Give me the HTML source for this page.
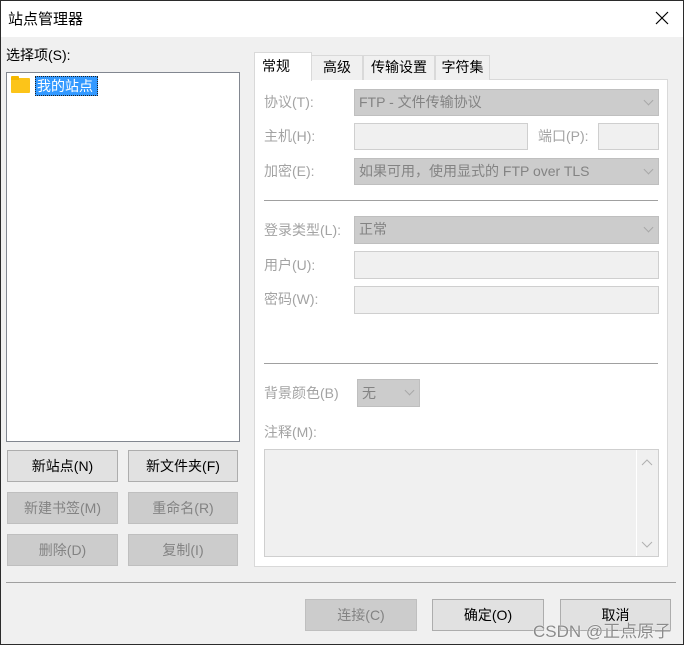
<!DOCTYPE html>
<html><head><meta charset="utf-8"><style>
*{box-sizing:border-box;margin:0;padding:0}
body{width:684px;height:645px;overflow:hidden;background:#fff;font-family:"Liberation Sans","Noto Sans CJK SC",sans-serif;font-size:14px;position:relative}
.a{position:absolute}
.win{left:0;top:0;width:684px;height:645px;border:1px solid #2b2b2b;background:#f0f0f0}
.title{left:1px;top:1px;width:682px;height:36px;background:#fff}
.btn{position:absolute;height:32px;border:1px solid #adadad;background:#e1e1e1;color:#000;text-align:center;line-height:30px;font-size:14px}
.dis{background:#cccccc;border-color:#bfbfbf;color:#838383}
.lbl{position:absolute;color:#a3a3a3;font-size:14px;line-height:18px}
.cmb{position:absolute;background:#cccccc;border:1px solid #bfbfbf;color:#838383;font-size:14px;line-height:24px;padding-left:4px}
.cmb:after{content:"";position:absolute;right:6px;top:7px;width:6px;height:6px;border-right:1px solid #a8a8a8;border-bottom:1px solid #a8a8a8;transform:rotate(45deg)}
.inp{position:absolute;background:#f0f0f0;border:1px solid #cfcfcf}
.tab{position:absolute;top:55px;height:25px;border:1px solid #d9d9d9;border-bottom:none;background:#f0f0f0;font-size:14px;line-height:22px;text-align:center}
.sep{position:absolute;height:1px;background:#a0a0a0}
</style></head><body>
<div class="a win"></div>
<div class="a title"></div>
<div class="a" style="left:8px;top:8px;font-size:15px">站点管理器</div>
<svg class="a" style="left:655px;top:11px" width="14" height="14"><path d="M1 1L13 13M13 1L1 13" stroke="#000" stroke-width="1.2"/></svg>

<div class="a" style="left:6px;top:45px">选择项(S):</div>
<div class="a" style="left:6px;top:72px;width:234px;height:370px;background:#fff;border:1px solid #828790"></div>
<div class="a" style="left:11px;top:78px;width:19px;height:15px;background:#fcc419;border-radius:1px"></div>
<div class="a" style="left:11px;top:76px;width:8px;height:4px;background:#f5b800;border-radius:1px 1px 0 0"></div>
<div class="a" style="left:35px;top:76px;width:63px;height:20px;background:#3399ff;border:1px dotted #222;color:#fff;line-height:18px;padding-left:1px">我的站点</div>

<div class="btn" style="left:7px;top:450px;width:111px">新站点(N)</div>
<div class="btn" style="left:128px;top:450px;width:110px">新文件夹(F)</div>
<div class="btn dis" style="left:7px;top:492px;width:111px">新建书签(M)</div>
<div class="btn dis" style="left:128px;top:492px;width:110px">重命名(R)</div>
<div class="btn dis" style="left:7px;top:534px;width:111px">删除(D)</div>
<div class="btn dis" style="left:128px;top:534px;width:110px">复制(I)</div>

<div class="a" style="left:254px;top:79px;width:414px;height:488px;background:#fff;border:1px solid #d9d9d9"></div>
<div class="tab" style="left:311px;width:52px">高级</div>
<div class="tab" style="left:363px;width:72px">传输设置</div>
<div class="tab" style="left:435px;width:55px">字符集</div>
<div class="tab" style="left:254px;top:52px;width:58px;height:29px;background:#fff;line-height:26px;text-align:left;padding-left:7px">常规</div>

<div class="lbl" style="left:264px;top:93px">协议(T):</div>
<div class="cmb" style="left:354px;top:89px;width:305px;height:27px">FTP - 文件传输协议</div>
<div class="lbl" style="left:264px;top:127px">主机(H):</div>
<div class="inp" style="left:354px;top:123px;width:174px;height:27px"></div>
<div class="lbl" style="left:538px;top:127px">端口(P):</div>
<div class="inp" style="left:598px;top:123px;width:61px;height:27px"></div>
<div class="lbl" style="left:264px;top:162px">加密(E):</div>
<div class="cmb" style="left:354px;top:158px;width:305px;height:27px">如果可用，使用显式的 FTP over TLS</div>
<div class="sep" style="left:264px;top:200px;width:394px"></div>

<div class="lbl" style="left:264px;top:221px">登录类型(L):</div>
<div class="cmb" style="left:354px;top:216px;width:305px;height:28px">正常</div>
<div class="lbl" style="left:264px;top:256px">用户(U):</div>
<div class="inp" style="left:354px;top:251px;width:305px;height:28px"></div>
<div class="lbl" style="left:264px;top:290px">密码(W):</div>
<div class="inp" style="left:354px;top:286px;width:305px;height:28px"></div>
<div class="sep" style="left:264px;top:363px;width:394px"></div>

<div class="lbl" style="left:264px;top:384px">背景颜色(B)</div>
<div class="cmb" style="left:357px;top:379px;width:63px;height:28px;line-height:26px">无</div>
<div class="lbl" style="left:264px;top:423px">注释(M):</div>
<div class="inp" style="left:264px;top:449px;width:395px;height:108px"></div>
<div class="a" style="left:636px;top:450px;width:1px;height:106px;background:#fff"></div>
<svg class="a" style="left:640px;top:456px" width="14" height="100"><path d="M2 9L7 4L12 9M2 86L7 91L12 86" stroke="#b0b0b0" fill="none"/></svg>

<div class="sep" style="left:6px;top:582px;width:670px"></div>
<div class="btn dis" style="left:305px;top:599px;width:112px">连接(C)</div>
<div class="btn" style="left:432px;top:599px;width:112px">确定(O)</div>
<div class="btn" style="left:560px;top:599px;width:111px">取消</div>
<div class="a" style="left:533px;top:617px;font-size:17px;color:#8a8a8a;text-shadow:0 0 1px #fff,0 0 1px #fff">CSDN @正点原子</div>
</body></html>
